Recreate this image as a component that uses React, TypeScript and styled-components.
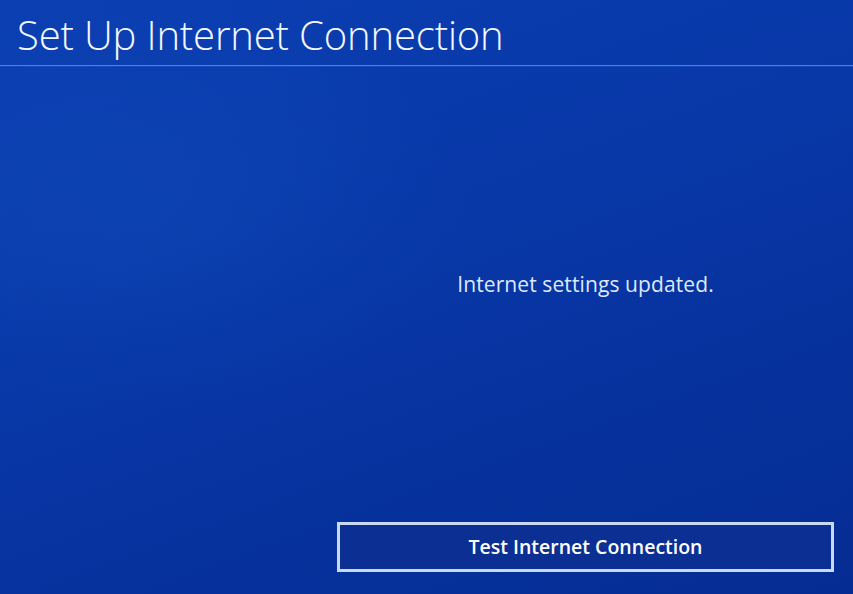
import React from "react";
import styled, { createGlobalStyle } from "styled-components";

const Global = createGlobalStyle`
  html, body { margin: 0; padding: 0; }
  body { width: 853px; height: 594px; overflow: hidden; }
  #root { width: 853px; height: 594px; }
`;

const Screen = styled.div`
  width: 853px;
  height: 594px;
  display: flex;
  flex-direction: column;
  background:
    radial-gradient(ellipse 500px 300px at 120px 200px, rgba(20, 80, 190, 0.35), transparent 70%),
    linear-gradient(160deg, #0b3fb2 0%, #0838a8 40%, #06319c 75%, #052c92 100%);
  font-family: "Open Sans", "Noto Sans", sans-serif;
  color: #fff;
  overflow: hidden;
`;

const Header = styled.header`
  height: 66px;
  box-sizing: border-box;
  padding: 10px 0 0 17px;
  border-bottom: 1px solid #4f7fd6;
  box-shadow: 0 1px 0 rgba(40, 100, 210, 0.35);
`;

const Title = styled.h1`
  margin: 0;
  font-weight: 300;
  font-size: 40px;
  line-height: 50px;
  letter-spacing: -0.15px;
  color: #f4f7ff;
`;

const Body = styled.main`
  flex: 1;
  display: flex;
  justify-content: flex-end;
  padding: 0 19px 22px 0;
`;

const Column = styled.section`
  width: 497px;
  display: flex;
  flex-direction: column;
  align-items: center;
`;

const Message = styled.p`
  margin: 203px 0 0;
  font-size: 21px;
  font-weight: 400;
  line-height: 30px;
  color: #dfe8fa;
  letter-spacing: 0.1px;
`;

const Spacer = styled.div`
  flex: 1;
`;

const Button = styled.button`
  width: 497px;
  height: 50px;
  box-sizing: border-box;
  border: 3px solid #c9d9f3;
  background: #0b2f92;
  color: #fff;
  font-family: "Open Sans", "Noto Sans", sans-serif;
  font-weight: 600;
  font-size: 19.5px;
  padding: 0 0 2px;
  cursor: pointer;
`;

export default function App() {
  return (
    <>
      <Global />
      <Screen>
        <Header>
          <Title>Set Up Internet Connection</Title>
        </Header>
        <Body>
          <Column>
            <Message>Internet settings updated.</Message>
            <Spacer />
            <Button>Test Internet Connection</Button>
          </Column>
        </Body>
      </Screen>
    </>
  );
}
